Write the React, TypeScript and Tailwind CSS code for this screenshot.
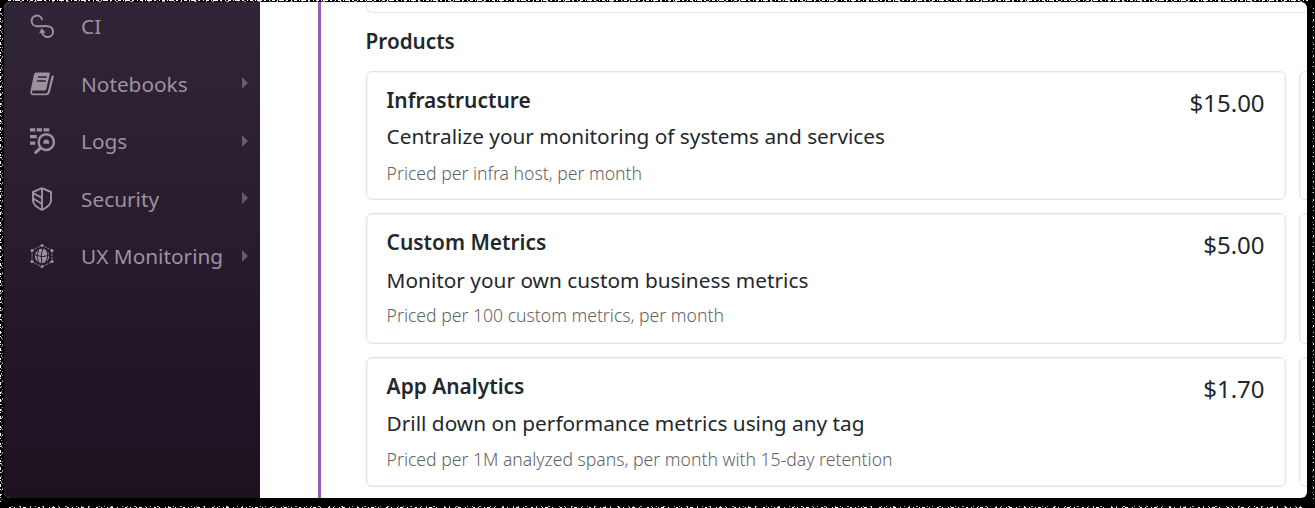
import type { ReactNode } from "react";

const svg = "block size-6 fill-none stroke-current";

function CiIcon() {
  return (
    <svg viewBox="0 0 24 24" className={svg} strokeWidth="2" strokeLinecap="round">
      <path d="M12 5.300A5.300 5.300 0 1 0 6.600 12.200C10 12.400 14 11.700 17.500 12.200A5.400 5.400 0 1 1 12.400 19" />
      <path d="M9.200 19.200l2.300-5 4.300 4.200z" fill="currentColor" stroke="none" />
    </svg>
  );
}

function NotebookIcon() {
  return (
    <svg viewBox="0 0 24 24" className={svg}>
      <path d="M6.200.5h12.300q1.700 0 1.300 1.600L16.300 17q-.4 1.500-2 1.500H3.600q-2.100 0-1.600 1.900.3 1 1.600 1h12.200q1.600 0 2-1.600L21.500 4.500q.3-1.200 1.800-1l.6.8-4.100 16q-.7 3-3.700 3H3.200Q-.2 23.300.500 19L4 2.200Q4.500.5 6.200.5z" fill="currentColor" stroke="none" />
      <path d="M8 5h8.800M7 9h8.800" stroke="#2c2030" strokeWidth="1.500" />
    </svg>
  );
}

function LogsIcon() {
  return (
    <svg viewBox="0 0 24 24" className="block h-[26px] w-[25px] fill-none stroke-current" preserveAspectRatio="none">
      <path d="M0 1.800h5M6.500 1.800h5M13 1.800h5.500M0 8h6.500M0 14h5" strokeWidth="3" />
      <circle cx="15.600" cy="13" r="7.300" strokeWidth="2.300" />
      <path d="M10 18.500L5.500 22.500" strokeWidth="2.800" strokeLinecap="round" />
      <path d="M12.800 14.500q-.3-3.800 2.800-3.800t2.800 3.800z" fill="currentColor" stroke="none" />
    </svg>
  );
}

function SecurityIcon() {
  return (
    <svg viewBox="0 0 24 24" className={svg} strokeWidth="1.900" strokeLinejoin="round">
      <path d="M12 1.200L3 5v8.500q0 5 9 9.500 9-4.500 9-9.500V5z" />
      <path d="M12 1.500V23M3.200 6.200L12 11M3.200 11.500L12 17" />
    </svg>
  );
}

function UxIcon() {
  return (
    <svg viewBox="0 0 24 24" className={svg}>
      <path d="M12 1.200l10 5.200v11.200l-10 5.200-10-5.200V6.400z" strokeWidth=".9" strokeDasharray="2 1" />
      <g fill="currentColor" stroke="none">
        <circle cx="12" cy="1.500" r="1.500" /><circle cx="22" cy="6.500" r="1.500" />
        <circle cx="22" cy="17.500" r="1.500" /><circle cx="12" cy="22.500" r="1.500" />
        <circle cx="2" cy="17.500" r="1.500" /><circle cx="2" cy="6.500" r="1.500" />
        <circle cx="12" cy="12" r="7.200" />
      </g>
      <path d="M12.800 4.500q-3 7-.8 15M5 11q7 3 14.500.5M8.500 6q-3 6 0 12M16.500 6q3 6-1 12" stroke="#281c2e" strokeWidth="1" />
    </svg>
  );
}

function NavItem({ icon, label, arrow = true }: { icon: ReactNode; label: string; arrow?: boolean }) {
  return (
    <div className="flex h-[57.500px] items-center pr-3 pl-[26px]">
      <span className="w-[51px]">{icon}</span>
      <span className="grow text-[20.800px] leading-7 font-[450] whitespace-nowrap">{label}</span>
      {arrow && (
        <svg viewBox="0 0 6 12" className="mb-px h-3 w-1.5 fill-[#665b6b]"><path d="M0 0l6 6-6 6z" /></svg>
      )}
    </div>
  );
}

type Product = { name: string; text: string; unit: string; price: string; card: string; title: string; desc: string };

const products: Product[] = [
  { name: "Infrastructure", text: "Centralize your monitoring of systems and services", unit: "Priced per infra host, per month", price: "$15.00", card: "h-[129px]", title: "h-9", desc: "h-[37px]" },
  { name: "Custom Metrics", text: "Monitor your own custom business metrics", unit: "Priced per 100 custom metrics, per month", price: "$5.00", card: "h-[131px]", title: "h-[38px]", desc: "h-[35px]" },
  { name: "App Analytics", text: "Drill down on performance metrics using any tag", unit: "Priced per 1M analyzed spans, per month with 15-day retention", price: "$1.70", card: "h-[130px]", title: "h-[37px]", desc: "h-9" },
];

const outline = "rounded-md border border-[#e3e4e7] shadow-[inset_0_0_0_1px_#f5f5f7]";

function Row({ p }: { p: Product }) {
  return (
    <div className="flex gap-[13px]">
      <section className={`flex w-[920px] shrink-0 justify-between px-5 pt-3.5 ${outline} ${p.card}`}>
        <div className="whitespace-nowrap">
          <h3 className={`text-[20.900px] leading-[28px] font-semibold ${p.title}`}>{p.name}</h3>
          <p className={`text-[20.800px] leading-[28px] ${p.desc}`}>{p.text}</p>
          <p className="text-[17.600px] leading-[28px] font-light text-[#5f6366]">{p.unit}</p>
        </div>
        <span className="pt-0.5 text-[24px] leading-[30px]">{p.price}</span>
      </section>
      <section className={`w-10 shrink-0 ${outline} ${p.card}`} />
    </div>
  );
}

function EdgeGrain() {
  return (
    <svg className="pointer-events-none absolute inset-0" width="1315" height="508" fill="none" stroke="#fff" shapeRendering="crispEdges">
      <path d="M8 .5H1308" strokeDasharray="3 2 1 1 5 2 2 3 1 2" />
      <path d="M20 1.500H1306" strokeDasharray="2 7 1 4 3 9 1 5" opacity=".6" />
      <path d="M9 507.500H1306" strokeDasharray="2 3 1 5 1 2 3 4 1 7" />
      <path d="M12 506.500H1306" strokeDasharray="1 6 2 9 1 4" opacity=".7" />
      <path d="M.5 8V502" strokeDasharray="3 2 1 4 2 1 1 3" />
      <path d="M1.500 8V500M2.500 15V495" strokeDasharray="1 4 2 7 1 3" opacity=".6" />
      <path d="M1313.500 8V500" strokeDasharray="1 3 1 6 2 5" opacity=".8" />
      <path d="M1312.500 12V496" strokeDasharray="1 8 1 5" opacity=".4" />
    </svg>
  );
}

export default function App() {
  return (
    <div className="relative h-[508px] w-[1315px] overflow-hidden bg-black pt-0.5 pl-1 font-['Noto_Sans',sans-serif] text-[#1f282c]">
      <main className="flex h-[496px] w-[1303px] overflow-hidden rounded-md bg-white">
        <nav className="h-full w-64 shrink-0 overflow-hidden bg-linear-to-b from-[#302536] via-[#281b2d] to-[#1d101f] text-[#9b92a0]">
          <div className="-mt-[4.500px]">
            <NavItem icon={<CiIcon />} label="CI" arrow={false} />
            <NavItem icon={<NotebookIcon />} label="Notebooks" />
            <NavItem icon={<LogsIcon />} label="Logs" />
            <NavItem icon={<SecurityIcon />} label="Security" />
            <NavItem icon={<UxIcon />} label="UX Monitoring" />
          </div>
        </nav>
        <div className="ml-[58px] w-[3px] shrink-0 bg-[#965eb5]" />
        <div className="ml-[44.600px] shrink-0">
          <div className="h-[11px] w-[1000px] rounded-b-md border border-t-0 border-[#e3e4e7]" />
          <h2 className="mt-3.5 h-11 text-[20.700px] leading-7 font-semibold">Products</h2>
          <div className="flex flex-col gap-[13px]">
            {products.map((p) => <Row key={p.name} p={p} />)}
          </div>
        </div>
      </main>
      <EdgeGrain />
    </div>
  );
}
